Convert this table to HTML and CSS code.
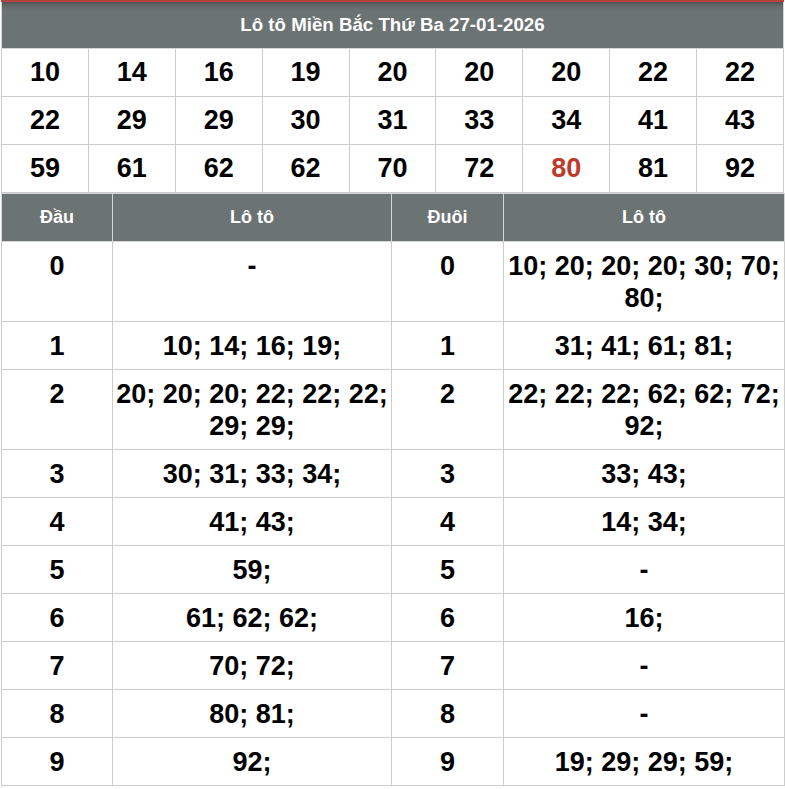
FILE: index.html
```html
<!DOCTYPE html>
<html lang="vi">
<head>
<meta charset="utf-8">
<title>Lô tô Miền Bắc</title>
<link rel="stylesheet" href="styles.css">
</head>
<body>
<div class="wrap">
  <div class="prev-strip"></div>
  <table class="grid">
    <thead>
      <tr><th colspan="9" class="title">Lô tô Miền Bắc Thứ Ba 27-01-2026</th></tr>
    </thead>
    <tbody>
      <tr><td>10</td><td>14</td><td>16</td><td>19</td><td>20</td><td>20</td><td>20</td><td>22</td><td>22</td></tr>
      <tr><td>22</td><td>29</td><td>29</td><td>30</td><td>31</td><td>33</td><td>34</td><td>41</td><td>43</td></tr>
      <tr><td>59</td><td>61</td><td>62</td><td>62</td><td>70</td><td>72</td><td class="hot">80</td><td>81</td><td>92</td></tr>
    </tbody>
  </table>
  <table class="heads">
    <colgroup><col class="c-key"><col class="c-val"><col class="c-key2"><col class="c-val2"></colgroup>
    <thead>
      <tr><th>Đầu</th><th>Lô tô</th><th>Đuôi</th><th>Lô tô</th></tr>
    </thead>
    <tbody>
      <tr><td>0</td><td>-</td><td>0</td><td>10; 20; 20; 20; 30; 70; 80;</td></tr>
      <tr><td>1</td><td>10; 14; 16; 19;</td><td>1</td><td>31; 41; 61; 81;</td></tr>
      <tr><td>2</td><td>20; 20; 20; 22; 22; 22; 29; 29;</td><td>2</td><td>22; 22; 22; 62; 62; 72; 92;</td></tr>
      <tr><td>3</td><td>30; 31; 33; 34;</td><td>3</td><td>33; 43;</td></tr>
      <tr><td>4</td><td>41; 43;</td><td>4</td><td>14; 34;</td></tr>
      <tr><td>5</td><td>59;</td><td>5</td><td>-</td></tr>
      <tr><td>6</td><td>61; 62; 62;</td><td>6</td><td>16;</td></tr>
      <tr><td>7</td><td>70; 72;</td><td>7</td><td>-</td></tr>
      <tr><td>8</td><td>80; 81;</td><td>8</td><td>-</td></tr>
      <tr><td>9</td><td>92;</td><td>9</td><td>19; 29; 29; 59;</td></tr>
    </tbody>
  </table>
</div>
</body>
</html>
```
FILE: styles.css
```css
html, body {
  margin: 0;
  padding: 0;
  background: #fff;
}
body {
  font-family: "Liberation Sans", Arial, sans-serif;
  color: #000;
}
.wrap {
  width: 783px;
  margin-left: 1px;
}
.prev-strip {
  height: 2px;
  background: #b8413e;
}
table {
  width: 783px;
  border-collapse: collapse;
  table-layout: fixed;
}
.grid td, .heads td {
  border: 1px solid #cccccc;
  text-align: center;
  vertical-align: top;
  font-weight: bold;
  font-size: 27px;
  line-height: 32px;
  padding: 7px 0 8px;
}
.grid th, .heads th {
  background: #6c7373;
  color: #fff;
  font-weight: bold;
  font-size: 18px;
  border: 1px solid #d6d6d6;
}
.grid .title {
  height: 46px;
  padding: 0;
  font-size: 18.7px;
  border-top: none;
  background: linear-gradient(to bottom, #4e5353 0, #646a6a 4px, #6c7373 9px);
}
.heads th {
  height: 47px;
  padding: 0;
}
.hot {
  color: #c0392b;
}
.c-key { width: 111px; }
.c-val { width: 279px; }
.c-key2 { width: 112px; }
.c-val2 { width: 281px; }
.heads td {
  padding: 8px 0 7px;
}
```
